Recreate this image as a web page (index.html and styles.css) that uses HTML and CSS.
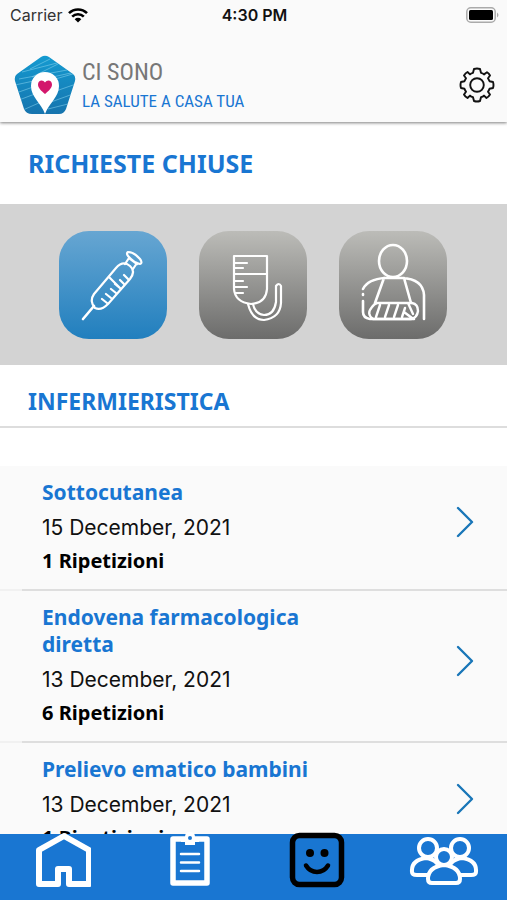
FILE: index.html
```html
<!DOCTYPE html>
<html lang="it">
<head>
<meta charset="utf-8">
<meta name="viewport" content="width=device-width, initial-scale=1">
<title>Ci Sono</title>
<link rel="stylesheet" href="styles.css">
</head>
<body>
<header class="top">
  <div class="status">
    <div class="carrier">Carrier
      <svg width="20" height="15" viewBox="0 0 20 15" fill="none" stroke="#000" stroke-width="2.6"><path d="M1 5.2a12.7 12.7 0 0 1 18 0M4.2 8.6a8.2 8.2 0 0 1 11.6 0"/><path d="M6.7 11.2a4.7 4.7 0 0 1 6.6 0L10 14.6z" fill="#000" stroke="none"/></svg>
    </div>
    <div class="clock">4:30 PM</div>
    <div class="battery">
      <svg width="33" height="16" viewBox="0 0 33 16"><rect x=".8" y=".8" width="28.4" height="14.4" rx="4" fill="#fafafa" stroke="#aaa" stroke-width="1.5"/><rect x="3" y="3" width="24" height="10" rx="1.5"/><path d="M31 5.5q3 2.500 0 5z" fill="#aaa"/></svg>
    </div>
  </div>
  <div class="brand-row">
    <a class="brand" href="#">
      <svg width="62" height="60" viewBox="0 0 62 60">
        <defs>
          <linearGradient id="penta" x1="0" y1="0" x2="0" y2="1"><stop offset="0" stop-color="#149bd1"/><stop offset="1" stop-color="#1673ad"/></linearGradient>
          <clipPath id="pentaClip"><path d="M27 2Q31-.5 35 2L59 19Q62 21 61 26L52 54Q50 59 45 59H18Q12 59 10 54L1 26Q0 21 3 19Z"/></clipPath>
        </defs>
        <g clip-path="url(#pentaClip)">
          <path d="M0 0h62v60H0z" fill="url(#penta)"/>
          <path d="M8 17 43 8M5 24 53 15M1 30 57 18M16 14l20-10M2 38l20-7M5 45l21-8M38 25l24-7M42 36l20-7M37 47l22-8M34 54l20-5M9 55l18-8M18 22 44 9" fill="none" stroke="#86d3ef" stroke-width="1" opacity=".55"/>
        </g>
        <path d="M31 59C27 48 17 42 17 31a14 14 0 0 1 28 0C45 42 35 48 31 59Z" fill="#fff"/>
        <path d="M31 39C27 35.500 24 33 24 29.500c0-4.500 5-5.500 7-2 2-3.500 7-2.500 7 2 0 3.500-3 6-7 9.500Z" fill="#d3176c"/>
      </svg>
      <span class="brand-text"><span class="name">CI SONO</span><span class="tag">LA SALUTE A CASA TUA</span></span>
    </a>
    <button class="settings" type="button" aria-label="Impostazioni">
      <svg width="36" height="36" viewBox="-18 -18 36 36" fill="none" stroke="#111" stroke-width="1.9" stroke-linejoin="round"><circle r="6.800"/><path d="M-3-16Q0-17 3-16L4-12.200Q6-11.700 7-10.600L10-12.700Q12-11.500 13-9.500L11-6.800Q12-5 12.500-3.800L16-3Q17 0 16 3L12.500 3.800Q12 5 11 6.800L13 9.500Q11.500 12 9.500 13L7 10.600Q6 11.700 4 12.200L3 16Q0 17-3 16L-4 12.200Q-6 11.700-7 10.600L-9.500 13Q-12 11.500-13 9.500L-11 6.800Q-12 5-12.500 3.800L-16 3Q-17 0-16-3L-12.500-3.800Q-12-5-11-6.800L-13-9.500Q-11.500-12-9.500-13L-7-10.600Q-6-11.700-4-12.200Z"/></svg>
    </button>
  </div>
</header>
<main>
  <h1>RICHIESTE CHIUSE</h1>
  <div class="tiles">
    <button class="tile active" type="button" aria-label="Infermieristica">
      <svg viewBox="0 0 108 108" fill="none" stroke="#fff" stroke-width="2.200" stroke-linecap="round" stroke-linejoin="round">
        <path d="M24 88 35 75" stroke-width="2.600"/>
        <path d="M36 77Q30 70 35 63L57 37Q64 29 71 35 77 40 71 48L49 73Q42 80 36 77Z"/>
        <path d="M50 46l11 11M66 33l4-6M74 38l4-6M70 27l8 6M69 21Q67 22 69 25 75 32 81 33 84 32 81 28 75 21 69 21ZM43 68l5 4M47 63l5 4M52 58l5 4M56 53l6 5M61 49l4 4M65 44l4 4"/>
      </svg>
    </button>
    <button class="tile" type="button" aria-label="Sacca">
      <svg viewBox="0 0 108 108" fill="none" stroke="#fff" stroke-width="2.200" stroke-linecap="round" stroke-linejoin="round">
        <path d="M35 25H68V58Q67 72 52 73 36 71 35 58ZM35 43H68M36 32H48M36 37H44M36 50H44M36 56H48M36 62H44"/>
        <path d="M49 73Q53 89 65 89 81 87 82 72V55Q80 51 77 55V71Q75 84 65 84 56 83 54 73"/>
      </svg>
    </button>
    <button class="tile" type="button" aria-label="Riabilitazione">
      <svg viewBox="0 0 108 108" fill="none" stroke="#fff" stroke-width="2.600" stroke-linecap="round" stroke-linejoin="round">
        <ellipse cx="54" cy="30" rx="14" ry="16"/>
        <path d="M24 58Q29 48 46 47H63Q84 48 85 64V88M24 63V64M24 70V81Q24 87 31 88H75M45 47 36 72M65 47 72 72"/>
        <path d="M38 72H73Q79 73 79 80 78 87 72 88H34Q27 83 33 76 35 73 38 72ZM65 81l8 6M69 72l5 11M37 86l4-12M46 86l4-12M55 86l4-12M63 86l3-9" stroke-width="2.400"/>
      </svg>
    </button>
  </div>
  <h2>INFERMIERISTICA</h2>
  <ul class="requests">
    <li><a href="#"><span class="info"><strong>Sottocutanea</strong><time datetime="2021-12-15">15 December, 2021</time><b>1 Ripetizioni</b></span><svg class="chevron" width="18" height="32" viewBox="0 0 18 32"><path d="M2 2 16 16 2 30"/></svg></a></li>
    <li><a href="#"><span class="info"><strong>Endovena farmacologica diretta</strong><time datetime="2021-12-13">13 December, 2021</time><b>6 Ripetizioni</b></span><svg class="chevron" width="18" height="32" viewBox="0 0 18 32"><path d="M2 2 16 16 2 30"/></svg></a></li>
    <li><a href="#"><span class="info"><strong>Prelievo ematico bambini</strong><time datetime="2021-12-13">13 December, 2021</time><b>1 Ripetizioni</b></span><svg class="chevron" width="18" height="32" viewBox="0 0 18 32"><path d="M2 2 16 16 2 30"/></svg></a></li>
  </ul>
</main>
<nav>
  <a href="#" aria-label="Home"><svg width="56" height="56" viewBox="0 0 56 56" fill="none" stroke="#fff" stroke-width="6" stroke-linejoin="round"><path d="M4 18 29 4 54 18V52H34V37H23V52H4Z"/></svg></a>
  <a href="#" aria-label="Richieste"><svg width="42" height="56" viewBox="0 0 42 56"><path d="M4 7H38V51H4Z" fill="none" stroke="#fff" stroke-width="5.500" stroke-linejoin="round"/><path d="M12 5h4Q16 0 21 0t5 5h4v5h-4v3H16v-3h-4Z" fill="#fff"/><circle cx="21" cy="6" r="2" fill="#1976d2"/><path d="M12 22H30M12 30.500H30M12 39H30" stroke="#fff" stroke-width="2.500" stroke-linecap="round"/></svg></a>
  <a href="#" aria-label="Profilo"><svg width="56" height="56" viewBox="0 0 56 56" fill="none" stroke="#000" stroke-width="4.500" stroke-linecap="round"><rect x="3.500" y="3.500" width="49" height="49" rx="7" stroke-width="5.500"/><circle cx="21" cy="21" r="4" fill="#000" stroke="none"/><circle cx="35.500" cy="21" r="4" fill="#000" stroke="none"/><path d="M17 33.500Q21 40 28 40T39 33.500"/></svg></a>
  <a href="#" aria-label="Gruppo"><svg width="70" height="56" viewBox="0 0 70 56" fill="#1976d2" stroke="#fff" stroke-width="4"><path d="M3 40Q2 28 17 26 31 28 31 40 31 43 27 43H8Q3 43 3 40ZM39 40Q39 28 53 26 68 28 67 40 67 43 62 43H43Q39 43 39 40Z"/><circle cx="19" cy="16" r="9"/><circle cx="51" cy="16" r="9"/><path d="M19 47Q19 35 35 33 51 35 51 47 51 51 47 51H23Q19 51 19 47Z"/><circle cx="35" cy="25" r="8"/></svg></a>
</nav>
</body>
</html>
```
FILE: styles.css
```css
* {
  box-sizing: border-box;
}

body {
  margin: 0;
  height: 100vh;
  display: flex;
  flex-direction: column;
  background: #fff;
  color: #111;
  font-family: Inter, "Liberation Sans", sans-serif;
}

svg {
  display: block;
}

a {
  color: inherit;
  text-decoration: none;
}

button {
  border: 0;
  padding: 0;
  background: none;
}

.top {
  position: relative;
  background: #fafafa;
  box-shadow: 0 1px 3px rgba(0, 0, 0, .5);
}

.status {
  display: grid;
  grid-template-columns: 1fr auto 1fr;
  align-items: center;
  height: 30px;
  padding: 0 8px 0 10px;
  font-size: 16px;
}

.carrier {
  display: flex;
  align-items: center;
  gap: 6px;
  color: #333;
}

.clock {
  font-weight: 600;
}

.battery {
  justify-self: end;
}

.brand-row {
  display: flex;
  align-items: center;
  justify-content: space-between;
  height: 92px;
  padding: 18px 12px 0 14px;
}

.brand {
  display: flex;
  align-items: center;
  gap: 6px;
}

.brand-text {
  display: flex;
  flex-direction: column;
  padding-top: 2px;
  font-family: "Roboto Condensed", "Liberation Sans", sans-serif;
}

.name {
  font-size: 24px;
  line-height: 30px;
  color: #777;
}

.tag {
  font-size: 17px;
  line-height: 28px;
  color: #1976d2;
}

main {
  flex: 1;
  min-height: 0;
  overflow-y: auto;
  scrollbar-width: none;
}

h1,
h2 {
  margin: 0;
  padding: 0 28px;
  font-family: "Noto Sans", sans-serif;
  font-weight: 700;
  color: #1976d2;
}

h1 {
  font-size: 25px;
  line-height: 82px;
}

h2 {
  font-size: 23px;
  line-height: 50px;
  padding-top: 11px;
  border-bottom: 2px solid #ddd;
}

.tiles {
  display: flex;
  justify-content: center;
  gap: 32px;
  padding: 27px 2px 26px 0;
  background: #d3d3d3;
}

.tile {
  width: 108px;
  height: 108px;
  border-radius: 30px;
  background: linear-gradient(#bcbcb8, #6c6c6b);
}

.tile.active {
  background: linear-gradient(#67a6d2, #217fbe);
}

.requests {
  margin: 0;
  padding: 36px 0 0;
  list-style: none;
}

.requests li {
  border-top: 2px solid transparent;
  background: #fafafa padding-box;
}

.requests li + li {
  background: linear-gradient(90deg, #f1f1f1 22px, #dedede 22px) border-box;
}

.requests a {
  display: flex;
  align-items: center;
  justify-content: space-between;
  padding: 13px 33px 14px 42px;
  background: #fafafa;
}

.info {
  display: flex;
  flex-direction: column;
  width: 290px;
}

.info strong {
  margin-bottom: 8px;
  font: 700 21px/27px "Noto Sans", sans-serif;
  color: #1976d2;
}

.info time {
  margin-bottom: 5px;
  font-size: 21px;
  line-height: 28px;
}

.info b {
  font: 700 20px/28px "Noto Sans", sans-serif;
  color: #000;
}

.chevron {
  margin-bottom: 10px;
  fill: none;
  stroke: #1976b8;
  stroke-width: 2.4;
  stroke-linecap: round;
  stroke-linejoin: round;
}

nav {
  position: relative;
  display: grid;
  grid-template-columns: repeat(4, 1fr);
  grid-template-rows: 100%;
  justify-items: center;
  align-items: end;
  height: 66px;
  padding-bottom: 12px;
  background: #1976d2;
}
```
